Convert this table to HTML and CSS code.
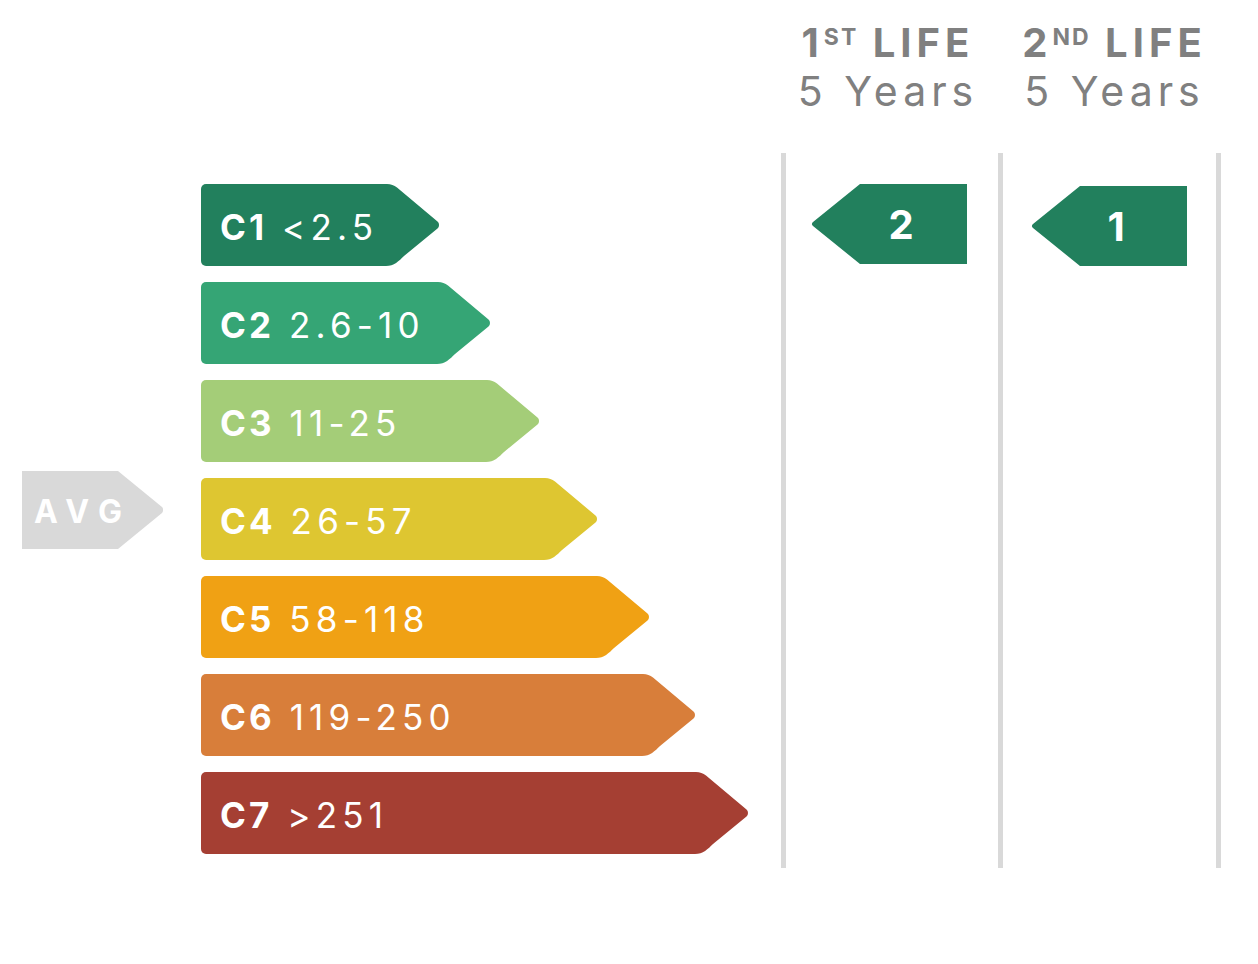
FILE: index.html
```html
<!DOCTYPE html>
<html lang="en">
<head>
<meta charset="utf-8">
<title>Energy classes</title>
<link rel="stylesheet" href="styles.css">
</head>
<body>
<div class="chart">
  <div class="head-spacer"></div>
  <div class="head head-first"><div class="life">1<sup>ST</sup> LIFE</div><div class="years">5 Years</div></div>
  <div class="head"><div class="life">2<sup>ND</sup> LIFE</div><div class="years">5 Years</div></div>

  <div class="scale">
    <div class="avg">
      <div class="avg-body">AVG</div>
      <svg class="avg-tip" viewBox="0 0 48 78" width="48" height="78"><path d="M0 0 H3 L47 36 C48.5 37.5 48.5 40.5 47 42 L3 78 H0 Z"/></svg>
    </div>
    <div class="bar c1"><div class="bar-body"><b>C1</b> &lt;2.5</div><svg class="tip" viewBox="0 0 56 82" width="56" height="82"><path d="M0 0 H3 C7 0 10 1.5 13 3.5 L53.5 37.5 C55.5 39.2 55.5 42.8 53.5 44.5 L20 72 C15 77 10 82 2 82 H0 Z"/></svg></div>
    <div class="bar c2"><div class="bar-body"><b>C2</b> 2.6-10</div><svg class="tip" viewBox="0 0 56 82" width="56" height="82"><path d="M0 0 H3 C7 0 10 1.5 13 3.5 L53.5 37.5 C55.5 39.2 55.5 42.8 53.5 44.5 L20 72 C15 77 10 82 2 82 H0 Z"/></svg></div>
    <div class="bar c3"><div class="bar-body"><b>C3</b> 11-25</div><svg class="tip" viewBox="0 0 56 82" width="56" height="82"><path d="M0 0 H3 C7 0 10 1.5 13 3.5 L53.5 37.5 C55.5 39.2 55.5 42.8 53.5 44.5 L20 72 C15 77 10 82 2 82 H0 Z"/></svg></div>
    <div class="bar c4"><div class="bar-body"><b>C4</b> 26-57</div><svg class="tip" viewBox="0 0 56 82" width="56" height="82"><path d="M0 0 H3 C7 0 10 1.5 13 3.5 L53.5 37.5 C55.5 39.2 55.5 42.8 53.5 44.5 L20 72 C15 77 10 82 2 82 H0 Z"/></svg></div>
    <div class="bar c5"><div class="bar-body"><b>C5</b> 58-118</div><svg class="tip" viewBox="0 0 56 82" width="56" height="82"><path d="M0 0 H3 C7 0 10 1.5 13 3.5 L53.5 37.5 C55.5 39.2 55.5 42.8 53.5 44.5 L20 72 C15 77 10 82 2 82 H0 Z"/></svg></div>
    <div class="bar c6"><div class="bar-body"><b>C6</b> 119-250</div><svg class="tip" viewBox="0 0 56 82" width="56" height="82"><path d="M0 0 H3 C7 0 10 1.5 13 3.5 L53.5 37.5 C55.5 39.2 55.5 42.8 53.5 44.5 L20 72 C15 77 10 82 2 82 H0 Z"/></svg></div>
    <div class="bar c7"><div class="bar-body"><b>C7</b> &gt;251</div><svg class="tip" viewBox="0 0 56 82" width="56" height="82"><path d="M0 0 H3 C7 0 10 1.5 13 3.5 L53.5 37.5 C55.5 39.2 55.5 42.8 53.5 44.5 L20 72 C15 77 10 82 2 82 H0 Z"/></svg></div>
  </div>

  <div class="col col-first">
    <div class="marker m1">
      <svg class="marker-tip" viewBox="0 0 51 80" width="51" height="80"><path d="M51 0 V80 H49 L2 42 C0.5 41 0.5 39 2 38 L49 0 Z"/></svg>
      <div class="marker-body">2</div>
    </div>
  </div>
  <div class="col col-second">
    <div class="marker m2">
      <svg class="marker-tip" viewBox="0 0 51 80" width="51" height="80"><path d="M51 0 V80 H49 L2 42 C0.5 41 0.5 39 2 38 L49 0 Z"/></svg>
      <div class="marker-body">1</div>
    </div>
  </div>
</div>
</body>
</html>
```

FILE: styles.css
```css
html, body {
  margin: 0;
  padding: 0;
  background: #ffffff;
}

body {
  font-family: Inter, "Noto Sans", "Liberation Sans", sans-serif;
}

.chart {
  display: grid;
  grid-template-columns: 781px 217px 223px;
  grid-template-rows: 153px 715px;
  width: 1221px;
}

.head {
  display: flex;
  flex-direction: column;
  align-items: center;
  padding-top: 19px;
  padding-left: 5px;
  color: #808080;
}

.head-first {
  padding-left: 0;
  padding-right: 8px;
}

.life {
  font-size: 40px;
  font-weight: 700;
  letter-spacing: 5px;
  line-height: 48px;
  margin-right: -5px;
}

.life sup {
  font-size: 23px;
  line-height: 0;
  vertical-align: 0;
  position: relative;
  top: -12px;
  letter-spacing: 2px;
}

.years {
  font-size: 41px;
  font-weight: 400;
  letter-spacing: 5px;
  line-height: 48px;
  margin-right: -5px;
}

/* scale */
.scale {
  display: grid;
  grid-template-columns: 201px 1fr;
  grid-auto-rows: 82px;
  row-gap: 16px;
  padding-top: 31px;
  align-content: start;
}

.bar {
  grid-column: 2;
  display: flex;
  height: 82px;
}

.bar-body {
  flex: 1;
  display: flex;
  align-items: center;
  padding-left: 19px;
  padding-top: 3px;
  box-sizing: border-box;
  border-radius: 5px 0 0 5px;
  background: currentColor;
  font-size: 35px;
  letter-spacing: 5.2px;
  white-space: pre;
}

.bar-body, .bar-body b {
  -webkit-text-fill-color: #ffffff;
}

.bar-body b {
  font-weight: 700;
  letter-spacing: 3px;
}

.tip {
  display: block;
  flex: none;
  margin-left: -1px;
  fill: currentColor;
}

.c1 { width: 239px; color: #22805d; grid-row: 1; }
.c2 { width: 290px; color: #35a575; grid-row: 2; }
.c3 { width: 339px; color: #a4cd78; grid-row: 3; }
.c4 { width: 397px; color: #dec631; grid-row: 4; }
.c5 { width: 449px; color: #f0a114; grid-row: 5; }
.c6 { width: 495px; color: #d87e3a; grid-row: 6; }
.c7 { width: 548px; color: #a53f33; grid-row: 7; }

.avg {
  grid-column: 1;
  grid-row: 4;
  display: flex;
  align-self: start;
  margin-top: -7px;
  margin-left: 22px;
  width: 141px;
  height: 78px;
}

.avg-body {
  width: 94px;
  flex: none;
  z-index: 1;
  background: #d9d9d9;
  color: #ffffff;
  font-size: 32px;
  font-weight: 700;
  letter-spacing: 10px;
  padding-left: 12px;
  box-sizing: border-box;
  display: flex;
  align-items: center;
  padding-top: 2px;
  white-space: nowrap;
}

.avg-tip {
  display: block;
  flex: none;
  margin-left: -1px;
  fill: #d9d9d9;
}

/* life columns */
.col {
  border-left: 5px solid #d9d9d9;
  padding-top: 31px;
}

.col-second {
  border-right: 5px solid #d9d9d9;
  padding-top: 33px;
}

.marker {
  display: flex;
  width: 156px;
  height: 80px;
}

.m1 { margin-left: 25px; }
.m2 { margin-left: 28px; }

.marker-tip {
  display: block;
  flex: none;
  margin-right: -1px;
  fill: #22805d;
}

.marker-body {
  flex: 1;
  background: #22805d;
  color: #ffffff;
  font-size: 40px;
  font-weight: 700;
  display: flex;
  align-items: center;
  justify-content: center;
  padding-right: 26px;
  padding-top: 0;
}

.m2 .marker-body {
  padding-right: 36px;
}
```
